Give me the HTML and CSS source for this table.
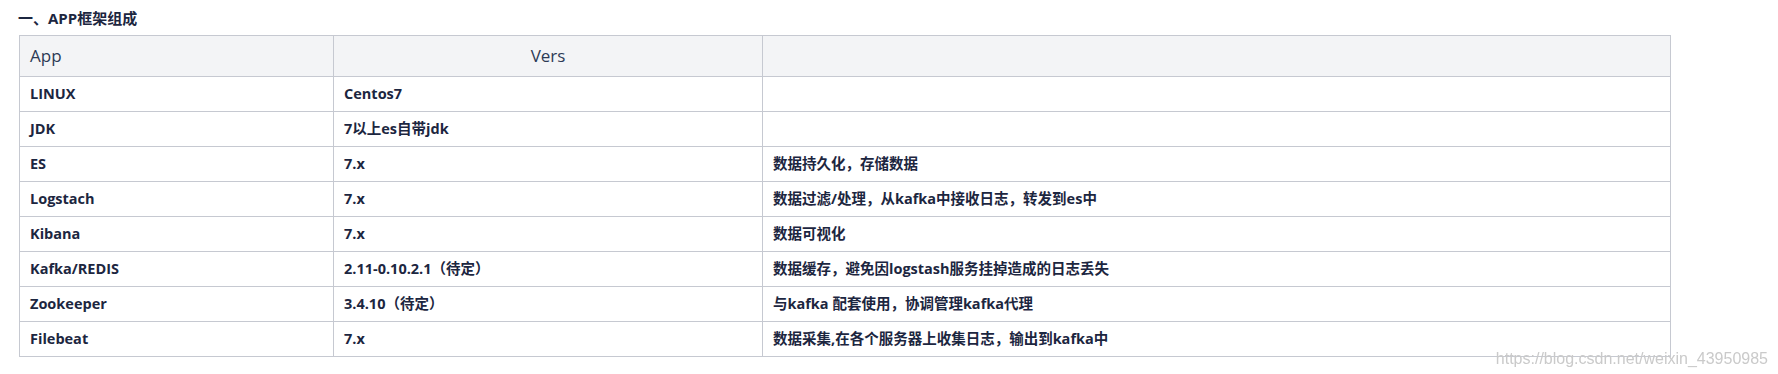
FILE: index.html
```html
<!DOCTYPE html>
<html lang="zh-CN">
<head>
<meta charset="utf-8">
<title>APP框架组成</title>
<link rel="stylesheet" href="styles.css">
</head>
<body>
<div class="page">
  <h3 class="title">一、APP框架组成</h3>
  <table class="grid">
    <colgroup>
      <col class="c1">
      <col class="c2">
      <col class="c3">
    </colgroup>
    <thead>
      <tr>
        <th class="left">App</th>
        <th class="center">Vers</th>
        <th></th>
      </tr>
    </thead>
    <tbody>
      <tr><td>LINUX</td><td>Centos7</td><td></td></tr>
      <tr><td>JDK</td><td>7以上es自带jdk</td><td></td></tr>
      <tr><td>ES</td><td>7.x</td><td>数据持久化，存储数据</td></tr>
      <tr><td>Logstach</td><td>7.x</td><td>数据过滤/处理，从kafka中接收日志，转发到es中</td></tr>
      <tr><td>Kibana</td><td>7.x</td><td>数据可视化</td></tr>
      <tr><td>Kafka/REDIS</td><td>2.11-0.10.2.1（待定）</td><td>数据缓存，避免因logstash服务挂掉造成的日志丢失</td></tr>
      <tr><td>Zookeeper</td><td>3.4.10（待定）</td><td>与kafka 配套使用，协调管理kafka代理</td></tr>
      <tr><td>Filebeat</td><td>7.x</td><td>数据采集,在各个服务器上收集日志，输出到kafka中</td></tr>
    </tbody>
  </table>
</div>
<div class="watermark">https://blog.csdn.net/weixin_43950985</div>
</body>
</html>
```
FILE: styles.css
```css
html, body {
  margin: 0;
  padding: 0;
  background: #ffffff;
}

.page {
  padding: 6px 0 0 19px;
  font-family: "Open Sans", "Noto Sans CJK SC", sans-serif;
  color: #1c2640;
}

.title {
  margin: 0 0 5px -1px;
  font-size: 15px;
  line-height: 24px;
  font-weight: 700;
  color: #1c2640;
}

.grid {
  border-collapse: collapse;
  table-layout: fixed;
  width: 1651px;
  font-size: 14.5px;
}

.c1 { width: 314px; }
.c2 { width: 429px; }
.c3 { width: 908px; }

.grid th,
.grid td {
  border: 1px solid #c6c9d1;
  padding: 6px 10px;
  line-height: 22px;
  text-align: left;
  white-space: nowrap;
  vertical-align: middle;
}

.grid th {
  background: #f3f4f6;
  font-weight: 400;
  font-size: 17px;
  line-height: 24px;
  padding: 8px 10px;
  color: #2c3a55;
}

.grid th.center {
  text-align: center;
}

.grid td {
  font-weight: 700;
  color: #1c2640;
}

.watermark {
  position: fixed;
  right: 10px;
  bottom: 5px;
  font-family: "Liberation Sans", Arial, sans-serif;
  font-size: 16px;
  line-height: 20px;
  color: #cacaca;
  white-space: nowrap;
}
```
